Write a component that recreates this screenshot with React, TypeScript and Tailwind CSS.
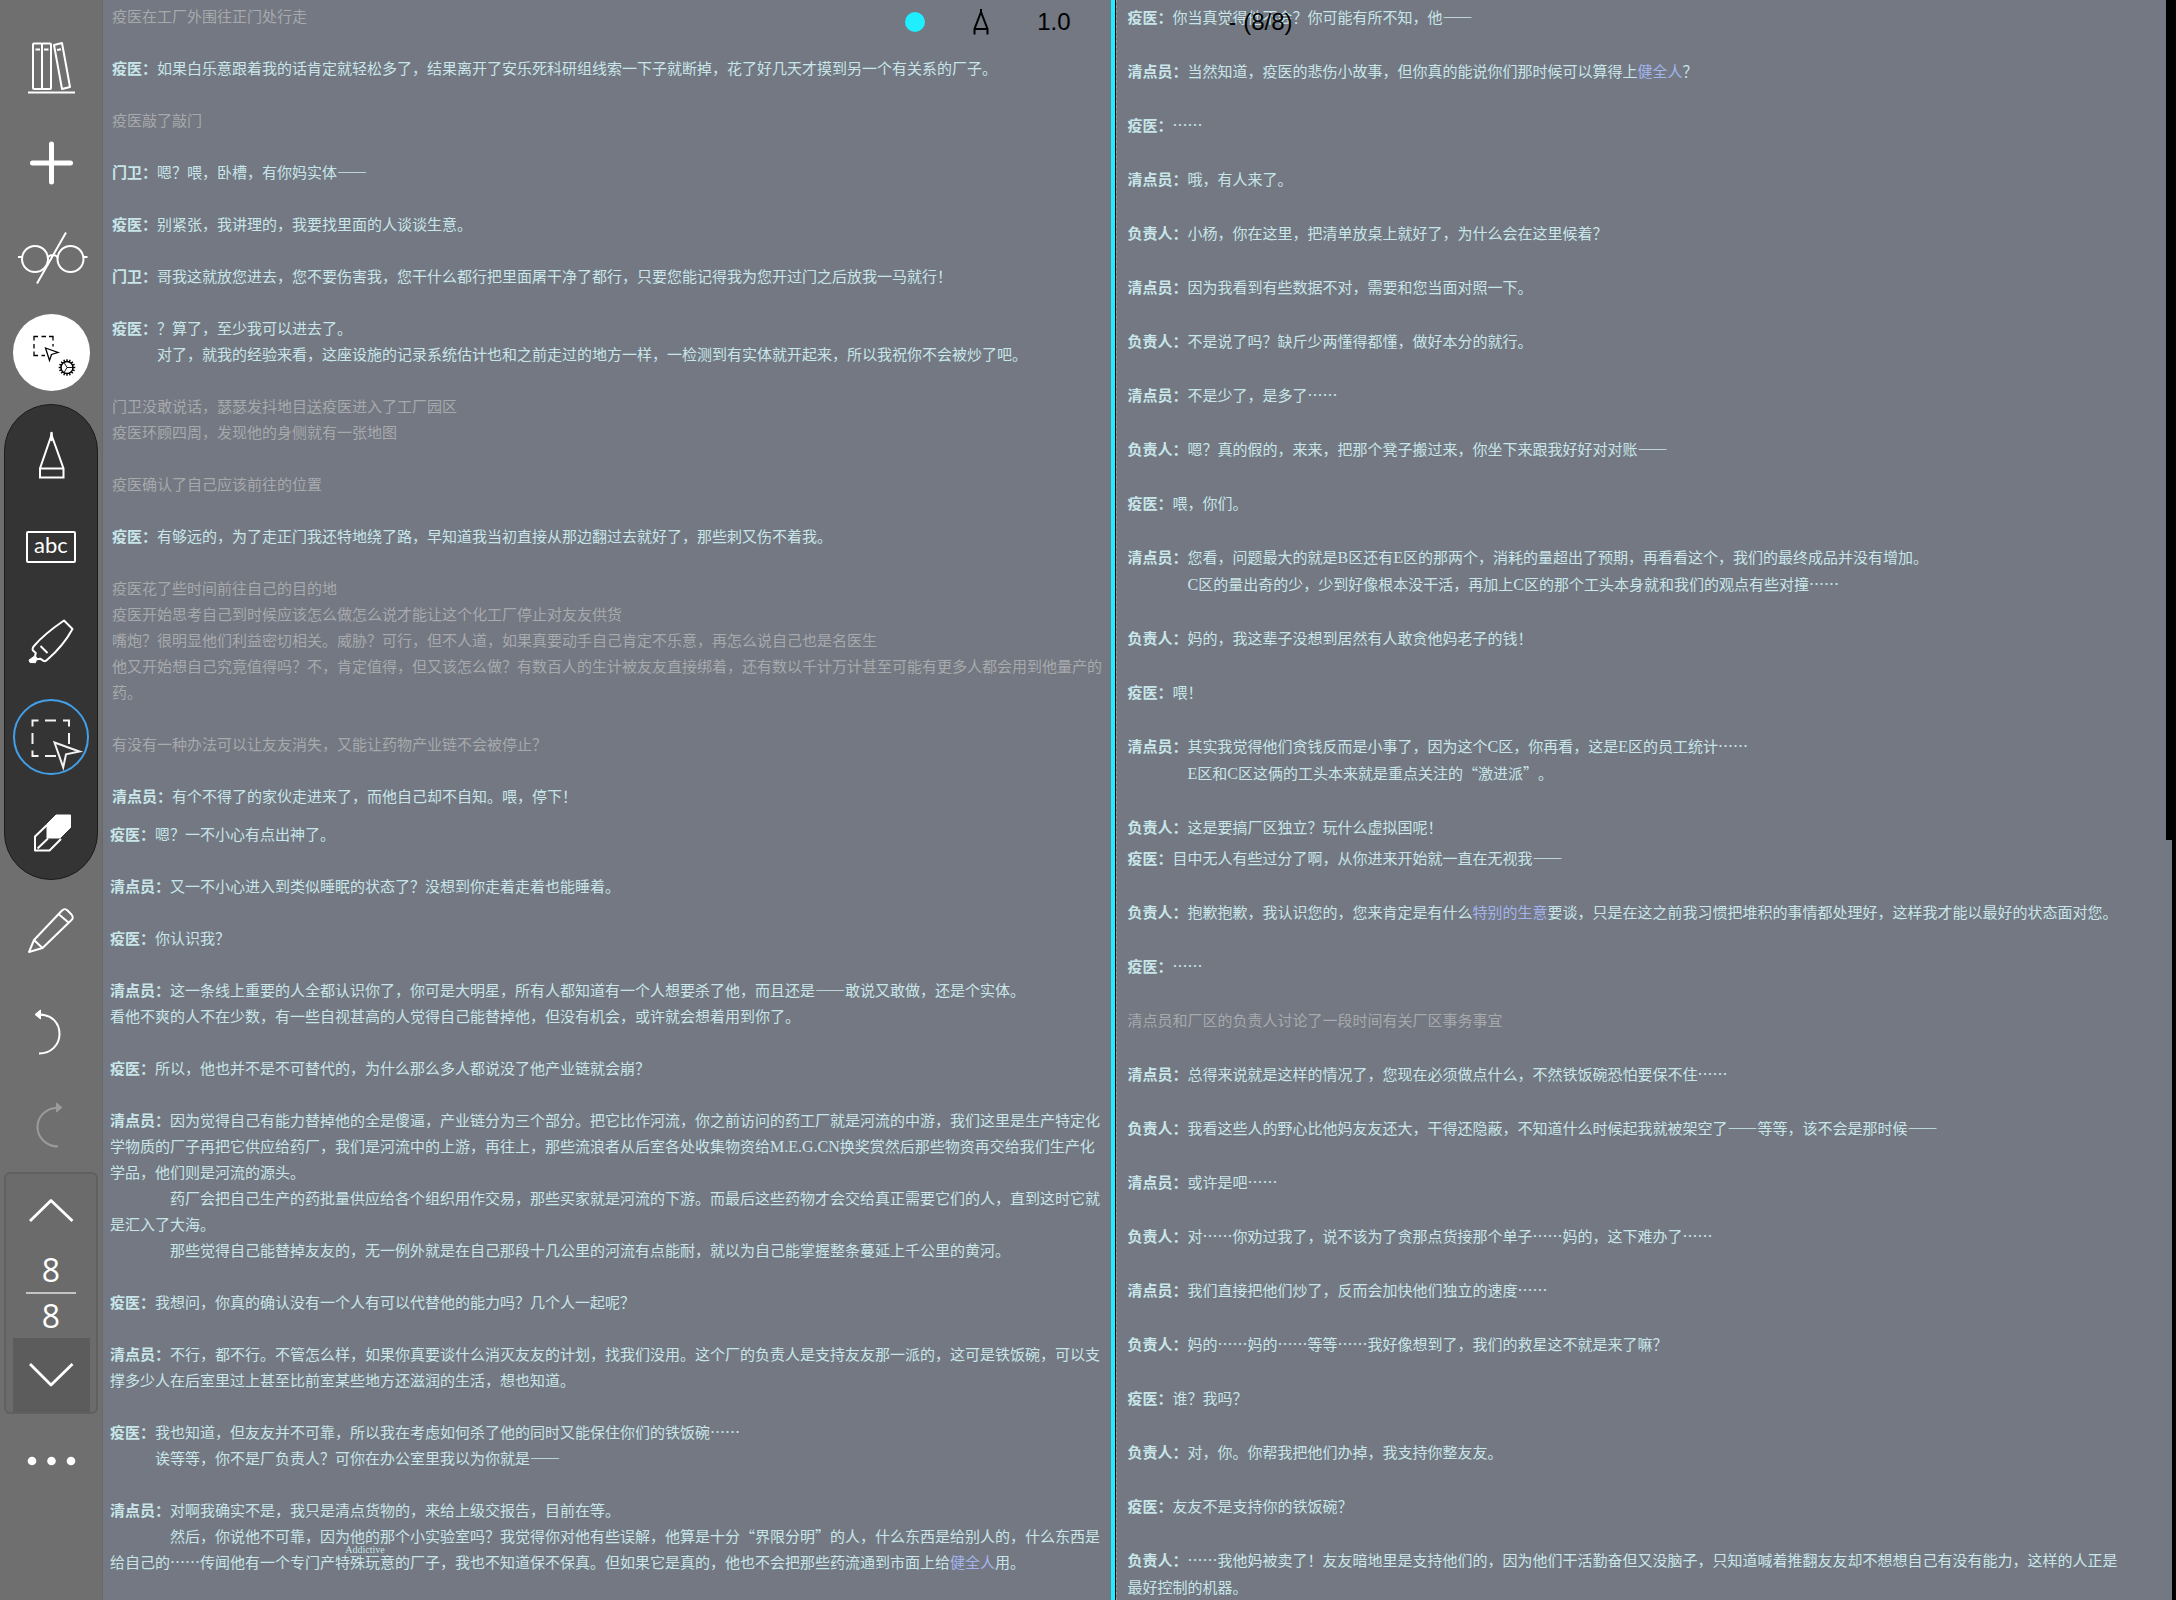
import React from "react";

type Para = {
  who?: string;
  lines: string[];
  indent?: 3 | 4;
};

const leftTop: Para[] = [
  { lines: ["疫医在工厂外围往正门处行走"] },
  { who: "疫医", lines: ["如果白乐意跟着我的话肯定就轻松多了，结果离开了安乐死科研组线索一下子就断掉，花了好几天才摸到另一个有关系的厂子。"] },
  { lines: ["疫医敲了敲门"] },
  { who: "门卫", lines: ["嗯？喂，卧槽，有你妈实体——"] },
  { who: "疫医", lines: ["别紧张，我讲理的，我要找里面的人谈谈生意。"] },
  { who: "门卫", lines: ["哥我这就放您进去，您不要伤害我，您干什么都行把里面屠干净了都行，只要您能记得我为您开过门之后放我一马就行！"] },
  { who: "疫医", indent: 3, lines: ["？算了，至少我可以进去了。", "对了，就我的经验来看，这座设施的记录系统估计也和之前走过的地方一样，一检测到有实体就开起来，所以我祝你不会被炒了吧。"] },
  { lines: ["门卫没敢说话，瑟瑟发抖地目送疫医进入了工厂园区", "疫医环顾四周，发现他的身侧就有一张地图"] },
  { lines: ["疫医确认了自己应该前往的位置"] },
  { who: "疫医", lines: ["有够远的，为了走正门我还特地绕了路，早知道我当初直接从那边翻过去就好了，那些刺又伤不着我。"] },
  {
    lines: [
      "疫医花了些时间前往自己的目的地",
      "疫医开始思考自己到时候应该怎么做怎么说才能让这个化工厂停止对友友供货",
      "嘴炮？很明显他们利益密切相关。威胁？可行，但不人道，如果真要动手自己肯定不乐意，再怎么说自己也是名医生",
      "他又开始想自己究竟值得吗？不，肯定值得，但又该怎么做？有数百人的生计被友友直接绑着，还有数以千计万计甚至可能有更多人都会用到他量产的药。",
    ],
  },
  { lines: ["有没有一种办法可以让友友消失，又能让药物产业链不会被停止？"] },
  { who: "清点员", lines: ["有个不得了的家伙走进来了，而他自己却不自知。喂，停下！"] },
];

const leftBottom: Para[] = [
  { who: "疫医", lines: ["嗯？一不小心有点出神了。"] },
  { who: "清点员", lines: ["又一不小心进入到类似睡眠的状态了？没想到你走着走着也能睡着。"] },
  { who: "疫医", lines: ["你认识我？"] },
  { who: "清点员", lines: ["这一条线上重要的人全都认识你了，你可是大明星，所有人都知道有一个人想要杀了他，而且还是——敢说又敢做，还是个实体。", "看他不爽的人不在少数，有一些自视甚高的人觉得自己能替掉他，但没有机会，或许就会想着用到你了。"] },
  { who: "疫医", lines: ["所以，他也并不是不可替代的，为什么那么多人都说没了他产业链就会崩？"] },
  {
    who: "清点员",
    indent: 4,
    lines: [
      "因为觉得自己有能力替掉他的全是傻逼，产业链分为三个部分。把它比作河流，你之前访问的药工厂就是河流的中游，我们这里是生产特定化学物质的厂子再把它供应给药厂，我们是河流中的上游，再往上，那些流浪者从后室各处收集物资给M.E.G.CN换奖赏然后那些物资再交给我们生产化学品，他们则是河流的源头。",
      "药厂会把自己生产的药批量供应给各个组织用作交易，那些买家就是河流的下游。而最后这些药物才会交给真正需要它们的人，直到这时它就是汇入了大海。",
      "那些觉得自己能替掉友友的，无一例外就是在自己那段十几公里的河流有点能耐，就以为自己能掌握整条蔓延上千公里的黄河。",
    ],
  },
  { who: "疫医", lines: ["我想问，你真的确认没有一个人有可以代替他的能力吗？几个人一起呢？"] },
  { who: "清点员", lines: ["不行，都不行。不管怎么样，如果你真要谈什么消灭友友的计划，找我们没用。这个厂的负责人是支持友友那一派的，这可是铁饭碗，可以支撑多少人在后室里过上甚至比前室某些地方还滋润的生活，想也知道。"] },
  { who: "疫医", indent: 3, lines: ["我也知道，但友友并不可靠，所以我在考虑如何杀了他的同时又能保住你们的铁饭碗……", "诶等等，你不是厂负责人？可你在办公室里我以为你就是——"] },
  { who: "清点员", indent: 4, lines: ["对啊我确实不是，我只是清点货物的，来给上级交报告，目前在等。", "然后，你说他不可靠，因为他的那个小实验室吗？我觉得你对他有些误解，他算是十分“界限分明”的人，什么东西是给别人的，什么东西是给自己的……传闻他有一个专门产{特殊玩意}的厂子，我也不知道保不保真。但如果它是真的，他也不会把那些药流通到市面上给[健全人]用。"] },
];

const rightTop: Para[] = [
  { who: "疫医", lines: ["你当真觉得他不会？你可能有所不知，他——"] },
  { who: "清点员", lines: ["当然知道，疫医的悲伤小故事，但你真的能说你们那时候可以算得上[健全人]？"] },
  { who: "疫医", lines: ["……"] },
  { who: "清点员", lines: ["哦，有人来了。"] },
  { who: "负责人", lines: ["小杨，你在这里，把清单放桌上就好了，为什么会在这里候着？"] },
  { who: "清点员", lines: ["因为我看到有些数据不对，需要和您当面对照一下。"] },
  { who: "负责人", lines: ["不是说了吗？缺斤少两懂得都懂，做好本分的就行。"] },
  { who: "清点员", lines: ["不是少了，是多了……"] },
  { who: "负责人", lines: ["嗯？真的假的，来来，把那个凳子搬过来，你坐下来跟我好好对对账——"] },
  { who: "疫医", lines: ["喂，你们。"] },
  { who: "清点员", indent: 4, lines: ["您看，问题最大的就是B区还有E区的那两个，消耗的量超出了预期，再看看这个，我们的最终成品并没有增加。", "C区的量出奇的少，少到好像根本没干活，再加上C区的那个工头本身就和我们的观点有些对撞……"] },
  { who: "负责人", lines: ["妈的，我这辈子没想到居然有人敢贪他妈老子的钱！"] },
  { who: "疫医", lines: ["喂！"] },
  { who: "清点员", indent: 4, lines: ["其实我觉得他们贪钱反而是小事了，因为这个C区，你再看，这是E区的员工统计……", "E区和C区这俩的工头本来就是重点关注的“激进派”。"] },
  { who: "负责人", lines: ["这是要搞厂区独立？玩什么虚拟国呢！"] },
];

const rightBottom: Para[] = [
  { who: "疫医", lines: ["目中无人有些过分了啊，从你进来开始就一直在无视我——"] },
  { who: "负责人", lines: ["抱歉抱歉，我认识您的，您来肯定是有什么[特别的生意]要谈，只是在这之前我习惯把堆积的事情都处理好，这样我才能以最好的状态面对您。"] },
  { who: "疫医", lines: ["……"] },
  { lines: ["清点员和厂区的负责人讨论了一段时间有关厂区事务事宜"] },
  { who: "清点员", lines: ["总得来说就是这样的情况了，您现在必须做点什么，不然铁饭碗恐怕要保不住……"] },
  { who: "负责人", lines: ["我看这些人的野心比他妈友友还大，干得还隐蔽，不知道什么时候起我就被架空了——等等，该不会是那时候——"] },
  { who: "清点员", lines: ["或许是吧……"] },
  { who: "负责人", lines: ["对……你劝过我了，说不该为了贪那点货接那个单子……妈的，这下难办了……"] },
  { who: "清点员", lines: ["我们直接把他们炒了，反而会加快他们独立的速度……"] },
  { who: "负责人", lines: ["妈的……妈的……等等……我好像想到了，我们的救星这不就是来了嘛？"] },
  { who: "疫医", lines: ["谁？我吗？"] },
  { who: "负责人", lines: ["对，你。你帮我把他们办掉，我支持你整友友。"] },
  { who: "疫医", lines: ["友友不是支持你的铁饭碗？"] },
  { who: "负责人", lines: ["……我他妈被卖了！友友暗地里是支持他们的，因为他们干活勤奋但又没脑子，只知道喊着推翻友友却不想想自己有没有能力，这样的人正是最好控制的机器。"] },
];

/* [text] is a link, {text} carries the small English gloss, Latin runs are set in a serif face. */
function Rich({ text }: { text: string }) {
  const parts = text.split(/(\[[^\]]+\]|\{[^}]+\}|[A-Z][A-Z.]*)/);
  return (
    <>
      {parts.map((part, i) => {
        if (part.startsWith("[")) {
          return (
            <a key={i} href="#" className="text-[#a3b4ee]">
              {part.slice(1, -1)}
            </a>
          );
        }
        if (part.startsWith("{")) {
          return (
            <span key={i} className="relative">
              {part.slice(1, -1)}
              <span className="absolute inset-x-0 -top-1.5 text-center indent-0 font-['Liberation_Serif',serif] text-[10px] leading-none">
                Addictive
              </span>
            </span>
          );
        }
        if (/^[A-Z]/.test(part)) {
          return (
            <span key={i} className="font-['Liberation_Serif',serif] text-base leading-none">
              {part}
            </span>
          );
        }
        return <React.Fragment key={i}>{part}</React.Fragment>;
      })}
    </>
  );
}

function Script({ paras, className }: { paras: Para[]; className: string }) {
  return (
    <div className={className}>
      {paras.map((para, i) => (
        <div key={i} className={para.who ? "text-[#c8e6e9]" : "text-[#a8a9ad]"}>
          {para.lines.map((line, j) => (
            <p key={j} className={j > 0 && para.indent === 3 ? "indent-[3em]" : j > 0 && para.indent === 4 ? "indent-[4em]" : ""}>
              {j === 0 && para.who && <b className="font-bold">{para.who}：</b>}
              <Rich text={line} />
            </p>
          ))}
        </div>
      ))}
    </div>
  );
}

function Icon({ children, className = "text-white" }: { children: React.ReactNode; className?: string }) {
  return (
    <svg
      viewBox="0 0 80 80"
      className={"size-20 shrink-0 " + className}
      fill="none"
      stroke="currentColor"
      strokeWidth="2"
      strokeLinejoin="round"
      aria-hidden="true"
    >
      {children}
    </svg>
  );
}

function ToolButton({ label, className, children }: { label: string; className: string; children: React.ReactNode }) {
  return (
    <button type="button" aria-label={label} className={"flex w-full shrink-0 items-center justify-center " + className}>
      {children}
    </button>
  );
}

const gearTeeth = Array.from({ length: 16 }, (_, i) => i * 22.5);

function Sidebar() {
  return (
    <nav aria-label="工具" className="flex w-[103px] shrink-0 flex-col items-center border-r border-[#676869] bg-[#6f6f6f] pt-5">
      <ToolButton label="书库" className="h-[95px]">
        <Icon>
          <rect x="22" y="15.5" width="9" height="45.5" rx="1" />
          <rect x="31" y="15.5" width="9" height="45.5" rx="1" />
          <path d="M43 17l8-2 8 44-8 2z" />
          <path d="M24.500 21.500h4.500M33 21.500h4.500M46 22l4-.8" />
          <path d="M17 64.500h47" />
        </Icon>
      </ToolButton>
      <ToolButton label="新建" className="h-[95px]">
        <Icon>
          <path d="M40.500 21v38M21.500 40h38" strokeWidth="5" strokeLinecap="round" />
        </Icon>
      </ToolButton>
      <ToolButton label="阅读模式" className="h-[95px]">
        <Icon>
          <circle cx="24" cy="41" r="13" />
          <circle cx="59.5" cy="41" r="13" />
          <path d="M36.500 40c2-4 8.500-4 10.500 0M7 39h4.500M72 39h4.500M55 14.500L26 65.500" />
        </Icon>
      </ToolButton>
      <ToolButton label="选择设置" className="h-[95px]">
        <span className="flex size-[77px] items-center justify-center rounded-full bg-white">
          <Icon className="text-black">
            <path
              d="M23 27.500v-4h4M30.500 23.500h4.500M38 23.500h4v4M42 31v2.500M23 31v4.500M23 38.500v4h4M30.500 42.500h3.500"
              strokeWidth="1.300"
              strokeLinejoin="miter"
            />
            <path d="M34.500 35l12.500 4.500-6.500 2-2 6z" strokeWidth="1.300" strokeLinejoin="miter" />
            <circle cx="56" cy="54.5" r="6" strokeWidth="1.500" />
            {gearTeeth.map((a) => (
              <path key={a} d="M56 48.500v-2.300" strokeWidth="1.400" transform={`rotate(${a} 56 54.500)`} />
            ))}
            <path d="M56 54.500h6M56 54.500l-3-5.200M56 54.500l-3 5.200" strokeWidth="0.900" />
          </Icon>
        </span>
      </ToolButton>

      <div className="mt-1 w-[94px] rounded-full border border-[#1c1c1c] bg-[#343434]">
        <ToolButton label="钢笔" className="h-[95px]">
          <Icon>
            <path d="M40.500 22L29 55.500v9h23.500v-9zM29 55.500h23.500" strokeLinejoin="miter" />
            <path d="M40.500 20v7" strokeWidth="2.500" strokeLinecap="round" />
          </Icon>
        </ToolButton>
        <ToolButton label="文字" className="h-[94px]">
          <span className="flex h-8 w-[50px] items-center justify-center rounded-xs border-2 border-white pb-1 font-[Lato,sans-serif] text-[22px] leading-none text-white">
            abc
          </span>
        </ToolButton>
        <ToolButton label="荧光笔" className="h-[95px]">
          <Icon>
            <path d="M53 18.500l8.500 8.500c-6 11-14 21-25 30.500-1.500 1.500-3 2-4 1.300l-3-2-3.500.5-2-3 .8-3.300-2.800-2.500c-1-1 0-3.500 1-4.500C31 34.500 42 26 53 18.500z" />
            <path d="M29.500 44l7 7" />
            <path d="M18 58l5-3.500 2.500 3-1 3.200-5.500-.2z" fill="currentColor" stroke="currentColor" strokeWidth="1" />
          </Icon>
        </ToolButton>
        <ToolButton label="套索选择" className="h-[95px]">
          <span className="flex size-[76px] items-center justify-center rounded-full border-2 border-[#439fe8]">
            <Icon className="text-[#f2f2f2]">
              <path
                d="M21.500 29.500v-6h6M34 23.500h11M52 23.500h6v6M58 36v11M21.500 36v11M21.500 53.500v5.500h6M34 59h11"
                strokeLinejoin="miter"
              />
              <path d="M43.500 45.500l25 9-13.500 2.800-2.800 13z" strokeLinejoin="miter" />
            </Icon>
          </span>
        </ToolButton>
        <ToolButton label="橡皮擦" className="h-[95px]">
          <Icon>
            <path d="M45 23h14.500v12.500L49 46H36V32z" fill="currentColor" strokeWidth="1" />
            <path d="M36 33L24 44.500v14h14.500L50 47M26.500 56.500L37 46.500" />
          </Icon>
        </ToolButton>
      </div>

      <ToolButton label="铅笔" className="h-[102px]">
        <Icon>
          <path d="M18 61l5-12L50.500 20c2.500-2.500 4-2.500 6-.5l4 4c2 2.500 1.500 4.500-.5 6L31.500 57zM23 49l8.500 8M47.500 23l10 8.500" />
        </Icon>
      </ToolButton>
      <ToolButton label="撤销" className="h-[102px]">
        <Icon>
          <path d="M28 21.500C41 21.500 48.500 30 48.500 41S40 60.500 28 60.500" />
          <path d="M24 21.500l5.500-4.500v9z" fill="currentColor" strokeWidth="1" />
        </Icon>
      </ToolButton>
      <ToolButton label="重做" className="h-[86px]">
        <Icon className="text-[#9b9b9b]">
          <path d="M47 20.500C34 21.500 26.500 30 26.500 40S35 59.500 47 59.500" />
          <path d="M51 20.500l-5.500-4.500v9z" fill="currentColor" strokeWidth="1" />
        </Icon>
      </ToolButton>

      <div className="mt-[2px] flex w-[94px] flex-col items-center rounded-md border-2 border-[#606060] bg-[#6b6b6b]">
        <ToolButton label="上一页" className="h-[74px]">
          <Icon>
            <path d="M19 50l21-20.500L61.500 50" strokeWidth="2.800" />
          </Icon>
        </ToolButton>
        <div className="flex w-[50px] flex-col text-center font-['Open_Sans',sans-serif] text-[32px] text-white">
          <span className="border-b-2 border-[#c4c4c4] leading-[44px]">8</span>
          <span className="leading-[44px]">8</span>
        </div>
        <ToolButton label="下一页" className="h-[74px]">
          <span className="flex h-full w-[77px] items-center justify-center overflow-hidden bg-[#5c5c5c]">
            <Icon>
              <path d="M19 29l21 21L61.500 29" strokeWidth="2.800" />
            </Icon>
          </span>
        </ToolButton>
      </div>

      <ToolButton label="更多" className="h-[94px]">
        <Icon>
          <g fill="currentColor" stroke="none">
            <circle cx="21" cy="40" r="4.300" />
            <circle cx="40.500" cy="40" r="4.300" />
            <circle cx="60" cy="40" r="4.300" />
          </g>
        </Icon>
      </ToolButton>
    </nav>
  );
}

export default function App() {
  return (
    <div
      lang="zh-CN"
      className="flex min-h-screen bg-[#737882] font-['Noto_Sans_CJK_SC',sans-serif] text-[15px] font-normal [text-spacing-trim:space-all]"
    >
      <Sidebar />

      <section aria-label="左页" className="relative min-w-0 flex-[1008]">
        <Script paras={leftTop} className="flex flex-col gap-[26px] pt-[3px] pr-1 pl-[9px] leading-[26px]" />
        <Script paras={leftBottom} className="mt-3 flex flex-col gap-[26px] pr-[7px] pl-[7px] leading-[26px]" />
        <div className="absolute top-2 right-10 flex h-7 items-center gap-[46px] font-['Liberation_Sans',sans-serif] text-2xl text-black">
          <button type="button" aria-label="颜色" className="size-5 rounded-full bg-[#1feeff]" />
          <button type="button" aria-label="笔尖" className="h-7 w-5">
            <svg viewBox="0 0 20 28" className="h-7 w-5" fill="none" stroke="currentColor" strokeWidth="2" aria-hidden="true">
              <path d="M10 1v4M10 4L3.500 21v5.500M10 4l6.500 17v5.500M3.500 21h13" />
            </svg>
          </button>
          <span>1.0</span>
        </div>
      </section>

      <div className="w-[5px] shrink-0 border-r border-black bg-[#1feeff]" />

      <section aria-label="右页" className="relative flex min-w-0 flex-[1060] flex-col border-l border-dashed border-[#9a9a9c]">
        <Script
          paras={rightTop}
          className="flex flex-col gap-[27px] border-r-10 border-black pt-[3px] pl-[11px] leading-[27px]"
        />
        <Script
          paras={rightBottom}
          className="flex grow flex-col gap-[27px] border-r-4 border-black pt-1 pr-11 pl-[11px] leading-[27px]"
        />
        <span className="absolute top-2 left-28 font-['Liberation_Sans',sans-serif] text-2xl leading-7 text-black">
          - (8/8)
        </span>
      </section>
    </div>
  );
}
